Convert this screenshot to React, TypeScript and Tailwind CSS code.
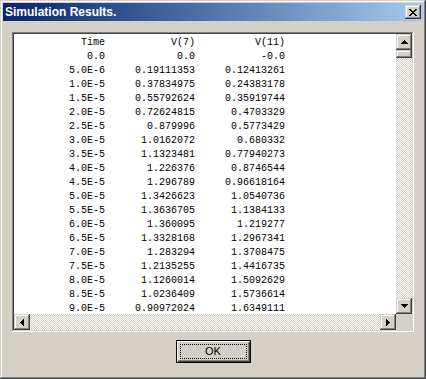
import React from 'react';

const rows: [string, string, string][] = [
    ['Time', 'V(7)', 'V(11)'],
    ['0.0', '0.0', '-0.0'],
    ['5.0E-6', '0.19111353', '0.12413261'],
    ['1.0E-5', '0.37834975', '0.24383178'],
    ['1.5E-5', '0.55792624', '0.35919744'],
    ['2.0E-5', '0.72624815', '0.4703329'],
    ['2.5E-5', '0.879996', '0.5773429'],
    ['3.0E-5', '1.0162072', '0.680332'],
    ['3.5E-5', '1.1323481', '0.77940273'],
    ['4.0E-5', '1.226376', '0.8746544'],
    ['4.5E-5', '1.296789', '0.96618164'],
    ['5.0E-5', '1.3426623', '1.0540736'],
    ['5.5E-5', '1.3636705', '1.1384133'],
    ['6.0E-5', '1.360095', '1.219277'],
    ['6.5E-5', '1.3328168', '1.2967341'],
    ['7.0E-5', '1.283294', '1.3708475'],
    ['7.5E-5', '1.2135255', '1.4416735'],
    ['8.0E-5', '1.1260014', '1.5092629'],
    ['8.5E-5', '1.0236409', '1.5736614'],
    ['9.0E-5', '0.90972024', '1.6349111'],
];

const raised =
    'bg-[#d4d0c8] shadow-[inset_-1px_-1px_#404040,inset_1px_1px_#d4d0c8,inset_-2px_-2px_#808080,inset_2px_2px_#ffffff]';

const hatch =
    'bg-[repeating-conic-gradient(#d4d0c8_0%_25%,#ffffff_0%_50%)] bg-[length:2px_2px]';

type Dir = 'up' | 'down' | 'left' | 'right';

const arrowPaths: Record<Dir, { w: number; h: number; d: string }> = {
    up: { w: 7, h: 4, d: 'M3 0h1v1h-1z M2 1h3v1h-3z M1 2h5v1h-5z M0 3h7v1h-7z' },
    down: { w: 7, h: 4, d: 'M0 0h7v1h-7z M1 1h5v1h-5z M2 2h3v1h-3z M3 3h1v1h-1z' },
    left: { w: 4, h: 7, d: 'M3 0h1v7h-1z M2 1h1v5h-1z M1 2h1v3h-1z M0 3h1v1h-1z' },
    right: { w: 4, h: 7, d: 'M0 0h1v7h-1z M1 1h1v5h-1z M2 2h1v3h-1z M3 3h1v1h-1z' },
};

const ScrollButton: React.FC<{ dir: Dir }> = ({ dir }) => {
    const a = arrowPaths[dir];
    return (
        <div className={`w-[16px] h-[16px] shrink-0 flex items-center justify-center ${raised}`}>
            <svg width={a.w} height={a.h} viewBox={`0 0 ${a.w} ${a.h}`} shapeRendering="crispEdges">
                <path d={a.d} fill="#000" />
            </svg>
        </div>
    );
};

const CloseGlyph = () => (
    <svg width="8" height="7" viewBox="0 0 8 7" shapeRendering="crispEdges">
        <path
            d="M0 0h2v1h-2z M6 0h2v1h-2z M1 1h2v1h-2z M5 1h2v1h-2z M2 2h4v1h-4z M3 3h2v1h-2z M2 4h4v1h-4z M1 5h2v1h-2z M5 5h2v1h-2z M0 6h2v1h-2z M6 6h2v1h-2z"
            fill="#000"
        />
    </svg>
);

export default function App() {
    return (
        <div className="w-[426px] h-[379px] p-[3px] flex flex-col bg-[#d4d0c8] shadow-[inset_-1px_-1px_#404040,inset_1px_1px_#d4d0c8,inset_-2px_-2px_#808080,inset_2px_2px_#ffffff]">
            {/* title bar */}
            <div className="h-[18px] shrink-0 flex items-center justify-between pl-[2px] pr-[2px] bg-gradient-to-r from-[#0a246a] to-[#a6caf0]">
                <span className="text-white font-bold text-[12px] leading-none font-['Liberation_Sans',Arial,sans-serif]">
                    Simulation Results.
                </span>
                <div className={`w-[16px] h-[14px] flex items-center justify-center ${raised}`}>
                    <CloseGlyph />
                </div>
            </div>

            {/* list box */}
            <div className="mt-[11px] mx-[9px] h-[300px] p-[2px] bg-white shadow-[inset_-1px_-1px_#ffffff,inset_1px_1px_#808080,inset_-2px_-2px_#d4d0c8,inset_2px_2px_#404040]">
                <div className="flex h-[280px]">
                    <div className="flex-1 overflow-hidden bg-white pt-[2px] pl-[1px] font-['Liberation_Mono','Courier_New',monospace] text-[10px] text-black">
                        {rows.map((r, i) => (
                            <div key={i} className="flex h-[14px] leading-[14px] whitespace-pre">
                                <div className="w-[90px] text-right">{r[0]}</div>
                                <div className="w-[90px] text-right">{r[1]}</div>
                                <div className="w-[90px] text-right">{r[2]}</div>
                            </div>
                        ))}
                    </div>
                    <div className="w-[16px] flex flex-col">
                        <ScrollButton dir="up" />
                        <div className={`h-[8px] shrink-0 ${raised}`} />
                        <div className={`flex-1 ${hatch}`} />
                        <ScrollButton dir="down" />
                    </div>
                </div>
                <div className="flex h-[16px]">
                    <ScrollButton dir="left" />
                    <div className={`flex-1 ${hatch}`} />
                    <ScrollButton dir="right" />
                    <div className="w-[16px] shrink-0 bg-[#d4d0c8]" />
                </div>
            </div>

            {/* buttons */}
            <div className="mt-[8px] flex justify-center">
                <button className="relative w-[75px] h-[23px] border border-black bg-[#d4d0c8] shadow-[inset_1px_1px_#ffffff,inset_-1px_-1px_#404040,inset_-2px_-2px_#808080] text-[11px] text-black font-['Liberation_Sans',Arial,sans-serif]">
                    <span className="absolute inset-[3px] border border-dotted border-black" />
                    OK
                </button>
            </div>
        </div>
    );
}
